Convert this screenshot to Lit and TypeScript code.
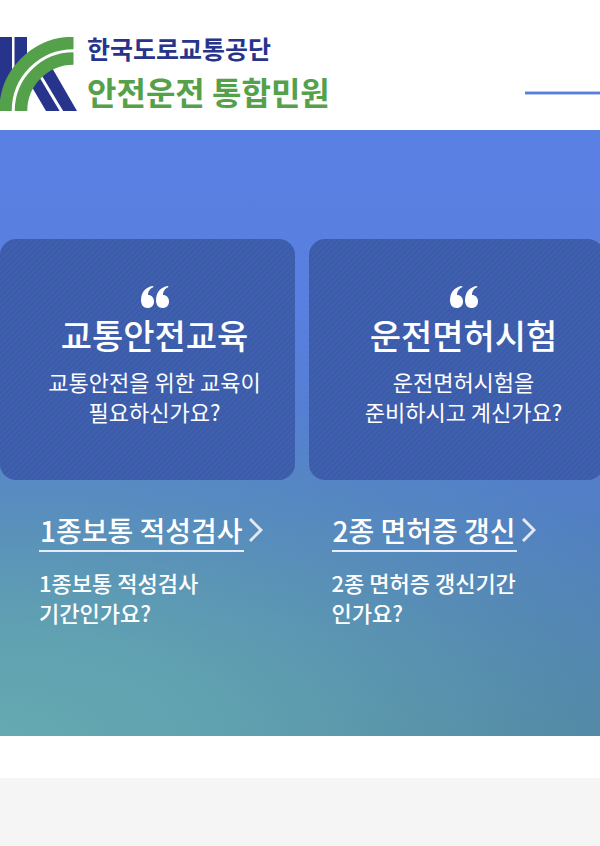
import { LitElement, html, css } from "lit";
import { customElement } from "lit/decorators.js";

interface Service {
  title: string;
  lines: string[];
}

const cards: Service[] = [
  { title: "교통안전교육", lines: ["교통안전을 위한 교육이", "필요하신가요?"] },
  { title: "운전면허시험", lines: ["운전면허시험을", "준비하시고 계신가요?"] },
];

const links: Service[] = [
  { title: "1종보통 적성검사", lines: ["1종보통 적성검사", "기간인가요?"] },
  { title: "2종 면허증 갱신", lines: ["2종 면허증 갱신기간", "인가요?"] },
];

@customElement("app-root")
export class AppRoot extends LitElement {
  static styles = css`
    :host {
      display: block;
      overflow: hidden;
      background: #fff;
      color: #fff;
      font-family: "Noto Sans CJK KR", "Noto Sans", sans-serif;
    }
    a {
      color: inherit;
      text-decoration: none;
    }
    h2, p {
      margin: 0;
    }
    .header {
      display: flex;
      justify-content: space-between;
      align-items: flex-start;
      height: 130px;
    }
    .brand {
      display: flex;
      gap: 10px;
      padding-top: 29px;
    }
    .mark {
      display: block;
      width: 77px;
      height: 74px;
      margin-top: 8px;
    }
    .names {
      display: flex;
      flex-direction: column;
      font-weight: 700;
      white-space: nowrap;
    }
    .org {
      font-size: 25px;
      line-height: 38px;
      color: #27348b;
    }
    .site {
      font-size: 32px;
      line-height: 48px;
      color: #55a14b;
    }
    .menu {
      width: 75px;
      height: 4px;
      margin-top: 91px;
      padding: 0;
      border: 0;
      background: linear-gradient(#b5c7ee 0 1px, #5980da 1px 3px, #b5c7ee 3px);
    }
    .hero {
      padding: 109px 0 106px;
      background:
        radial-gradient(ellipse 125% 58% at 0% 100%, #65aab2 0%, rgba(101, 170, 178, 0.78) 30%, rgba(101, 170, 178, 0.3) 68%, rgba(101, 170, 178, 0) 100%),
        linear-gradient(#5980e3 0%, #597fe0 30%, #527fc5 62%, #4f82a3 100%);
    }
    .cards {
      display: grid;
      grid-template-columns: 1fr 1fr;
      gap: 14px;
      margin-right: -4px;
    }
    .card {
      display: flex;
      flex-direction: column;
      align-items: center;
      padding: 47px 0 54px 14px;
      border-radius: 16px;
      text-align: center;
      background: repeating-linear-gradient(135deg, #3c5bab 0 2px, #3f61ad 2px 4px);
    }
    .quote {
      display: block;
      width: 28px;
      height: 22px;
    }
    .card-title {
      margin-top: 2px;
      font-size: 34px;
      line-height: 50px;
      font-weight: 500;
    }
    .text {
      font-size: 22px;
      line-height: 30px;
    }
    .card .text {
      margin-top: 6px;
    }
    .links {
      display: grid;
      grid-template-columns: 1fr 1fr;
      padding: 30px 0 0 39px;
    }
    .links > :nth-child(2) {
      margin-left: 12px;
    }
    .link {
      display: flex;
      align-items: center;
      gap: 5px;
    }
    .link-title {
      padding: 0 1px;
      border-bottom: 2px solid #e3eef8;
      font-size: 28px;
      line-height: 40px;
      font-weight: 500;
    }
    .arrow {
      width: 14px;
      height: 24px;
      margin-bottom: 2px;
    }
    .links .text {
      margin-top: 15px;
      padding-bottom: 3px;
      font-weight: 500;
    }
    .footer {
      height: 68px;
      margin-top: 42px;
      background: #f5f5f5;
    }
  `;

  render() {
    return html`
      <header class="header">
        <a class="brand" href="#">
          <svg class="mark" viewBox="0 0 77 74" aria-hidden="true">
            <path fill="#27348b" d="M0 0H12V74H0ZM14.500 0H27V60H14.500Z" />
            <path fill="#fff" d="M73 1A73 73 0 0 0 0 74H73Z" />
            <path fill="#27348b" d="M51 29 77 74H46L29 45Z" />
            <path fill="none" stroke="#fff" stroke-width="3" d="M38 35 62 75" />
            <path fill="none" stroke="#fff" stroke-width="4" d="M13.500 74A59.500 59.500 0 0 1 73.500 14" />
            <path fill="none" stroke="#55a14b" stroke-width="12.500" d="M5.500 74A68 68 0 0 1 73.500 6M21 74A52.500 52.500 0 0 1 73.500 21.500" />
          </svg>
          <span class="names">
            <span class="org">한국도로교통공단</span>
            <span class="site">안전운전 통합민원</span>
          </span>
        </a>
        <button class="menu" aria-label="메뉴"></button>
      </header>
      <main class="hero">
        <div class="cards">
          ${cards.map(
            (c) => html`
              <a class="card" href="#">
                <svg class="quote" viewBox="0 0 28 22" fill="#fff" aria-hidden="true">
                  <path d="M12 0C4 1 0 7 0 14c0 5 2.500 8 6.500 8s6.500-2.500 6.500-6.500-2.500-6.500-6-6.500C7 6 8.500 2.500 12.500 1Z" />
                  <path d="M27 0C19 1 15 7 15 14c0 5 2.500 8 6.500 8s6.500-2.500 6.500-6.500-2.500-6.500-6-6.500C22 6 23.500 2.500 27.500 1Z" />
                </svg>
                <h2 class="card-title">${c.title}</h2>
                <p class="text">${c.lines[0]}<br />${c.lines[1]}</p>
              </a>
            `,
          )}
        </div>
        <div class="links">
          ${links.map(
            (l) => html`
              <section>
                <a class="link" href="#">
                  <h2 class="link-title">${l.title}</h2>
                  <svg class="arrow" viewBox="0 0 14 24" aria-hidden="true">
                    <path fill="none" stroke="#e3e8f2" stroke-width="3" d="M1 1 12 12 1 23" />
                  </svg>
                </a>
                <p class="text">${l.lines[0]}<br />${l.lines[1]}</p>
              </section>
            `,
          )}
        </div>
      </main>
      <footer class="footer"></footer>
    `;
  }
}
